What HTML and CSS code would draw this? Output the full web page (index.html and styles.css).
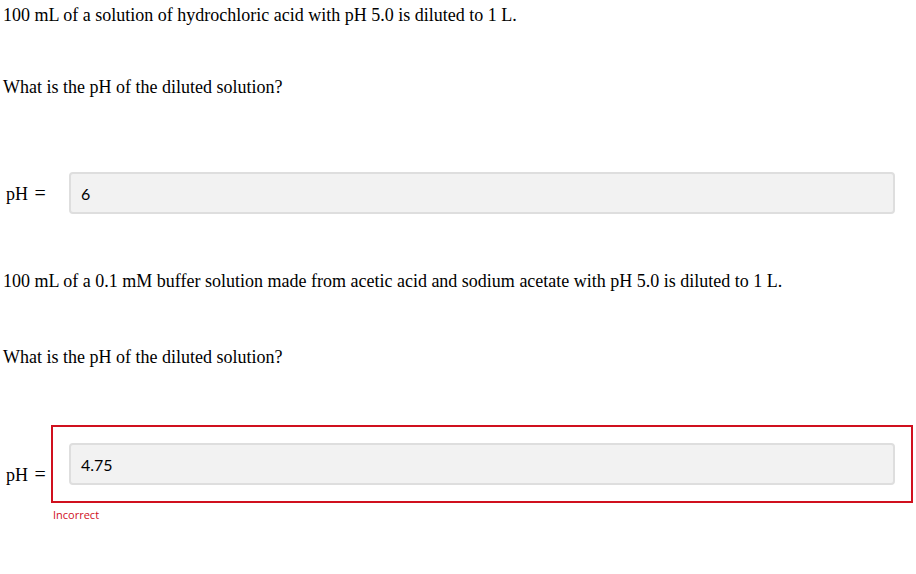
FILE: index.html
```html
<!DOCTYPE html>
<html>
<head>
<meta charset="utf-8">
<link rel="stylesheet" href="styles.css">
</head>
<body>
<div class="page">
  <p class="stmt first">100 mL of a solution of hydrochloric acid with pH 5.0 is diluted to 1 L.</p>
  <p class="stmt ask">What is the pH of the diluted solution?</p>
  <div class="row">
    <div class="label">pH <span class="eq">=</span></div>
    <div class="col">
      <div class="box">
        <div class="field">6</div>
      </div>
    </div>
  </div>
  <p class="stmt next">100 mL of a 0.1 mM buffer solution made from acetic acid and sodium acetate with pH 5.0 is diluted to 1 L.</p>
  <p class="stmt ask ask2">What is the pH of the diluted solution?</p>
  <div class="row row2">
    <div class="label">pH <span class="eq">=</span></div>
    <div class="col">
      <div class="box wrong">
        <div class="field">4.75</div>
      </div>
      <div class="feedback">Incorrect</div>
    </div>
  </div>
</div>
</body>
</html>
```
FILE: styles.css
```css
html, body {
  margin: 0;
  padding: 0;
  background: #ffffff;
}
.page {
  width: 916px;
  padding: 0 0 0 3px;
  box-sizing: border-box;
  font-family: "Liberation Serif", "Times New Roman", serif;
  font-size: 18px;
  color: #000000;
}
.stmt {
  margin: 0;
  line-height: 20px;
}
.first {
  padding-top: 5px;
}
.ask {
  margin-top: 52px;
}
.ask2 {
  margin-top: 56px;
}
.next {
  margin-top: 39px;
}
.row {
  display: flex;
  align-items: center;
  margin-top: 57px;
  margin-right: 3px;
}
.row2 {
  margin-top: 58px;
}
.label {
  padding-left: 3px;
  width: 45px;
  height: 20px;
  line-height: 20px;
  white-space: nowrap;
}
.eq {
  font-size: 20px;
  line-height: 1;
  margin-left: 2px;
}
.col {
  flex: 1;
}
.box {
  border: 2px solid transparent;
  padding: 16px 16px;
}
.box.wrong {
  border-color: #d0101e;
}
.field {
  height: 38px;
  border: 2px solid #dedede;
  border-radius: 4px;
  background: #f2f2f2;
  box-sizing: content-box;
  padding: 0 10px;
  display: flex;
  align-items: center;
  font-family: Lato, "Liberation Sans", sans-serif;
  font-size: 16px;
  color: #000000;
}
.feedback {
  padding: 5px 0 0 2px;
  font-family: "Open Sans", "Liberation Sans", sans-serif;
  font-size: 11px;
  line-height: 14px;
  color: #d0101e;
}
```
